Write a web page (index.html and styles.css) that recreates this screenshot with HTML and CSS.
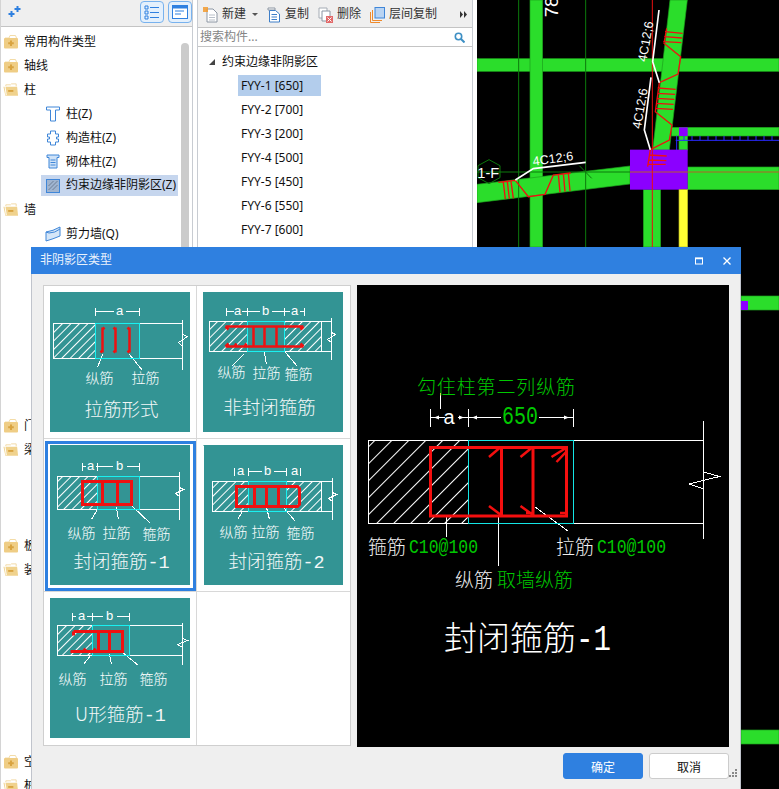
FILE: index.html
```html
<!DOCTYPE html>
<html lang="zh-CN">
<head>
<meta charset="utf-8">
<title>非阴影区类型</title>
<link rel="stylesheet" href="styles.css">
</head>
<body>
<svg class="defs" aria-hidden="true">
  <defs>
    <pattern id="h6" width="6" height="6" patternUnits="userSpaceOnUse" patternTransform="rotate(45)"><path class="ha" d="M0 0V6"/></pattern>
    <pattern id="h12" width="12" height="12" patternUnits="userSpaceOnUse" patternTransform="rotate(45)"><path class="ha" d="M0 0V12"/></pattern>
    <symbol id="fold-plus" viewBox="0 0 16 14">
      <path d="M2 3H6L7 0.5H12.5L13.5 3" fill="none" stroke="#f3dca8"/>
      <rect x="1" y="3" width="14" height="10.5" rx="1" fill="#efcd85"/>
      <path d="M8 5.5V11M5.2 8.2H10.8" stroke="#d9a441" stroke-width="2"/>
    </symbol>
    <symbol id="fold-minus" viewBox="0 0 17 14">
      <path d="M3 3V1.5H8L9 .5H14V3" fill="none" stroke="#f1d9a3"/>
      <path d="M0.5 3.5H15L16 13H2.5Z" fill="#f0d28d"/>
      <path d="M2 2.6 3.5 12.5" stroke="#fff" stroke-width="1"/>
      <path d="M5.5 8H11" stroke="#d9a441" stroke-width="2"/>
    </symbol>
  </defs>
</svg>

<div class="app">
  <aside class="side">
    <div class="bar side-bar">
      <svg class="ico-add" viewBox="0 0 14 12"><path d="M9.5 0V6M6.5 3H12.5" stroke="#2f80e0" stroke-width="2"/><path d="M3.5 5V11M.5 8H6.5" stroke="#2f80e0" stroke-width="2"/></svg>
      <div class="side-tools">
        <button class="tool"><svg viewBox="0 0 16 16"><path d="M1 2h3v3H1zM1 7h3v3H1zM1 12h3v3H1z" fill="none" stroke="#2f80e0"/><path d="M6 3.5h9M6 8.5h9M6 13.5h9" stroke="#2f80e0"/></svg></button>
        <button class="tool"><svg viewBox="0 0 16 16"><rect x=".5" y="1.5" width="15" height="13" fill="#fff" stroke="#2f80e0"/><rect x=".5" y="1.5" width="15" height="3" fill="#2f80e0"/><path d="M3 7h9M3 10h6" stroke="#2f80e0"/></svg></button>
      </div>
    </div>
    <div class="tree">
      <div class="row"><svg class="fold"><use href="#fold-plus"/></svg>常用构件类型</div>
      <div class="row"><svg class="fold"><use href="#fold-plus"/></svg>轴线</div>
      <div class="row"><svg class="fold"><use href="#fold-minus"/></svg>柱</div>
      <div class="row kid"><svg class="ti" viewBox="0 0 15 16"><path d="M1 1H14V4H10V15H5V4H1Z" fill="#fff" stroke="#3f86d8"/></svg>柱(Z)</div>
      <div class="row kid"><svg class="ti" viewBox="0 0 15 16"><path d="M5 1H10V4H13V7H11V9H13V12H10V15H5V12H2V9H4V7H2V4H5Z" fill="#fff" stroke="#3f86d8"/></svg>构造柱(Z)</div>
      <div class="row kid"><svg class="ti" viewBox="0 0 15 16"><path d="M1.500 1H13.500V3.500H11.500V14H3.500V3.500H1.500Z" fill="#cfe2f7" stroke="#3f86d8"/><path d="M5 6H10M5 8.500H10M5 11H10" stroke="#3f86d8"/></svg>砌体柱(Z)</div>
      <div class="row kid sel"><svg class="ti" viewBox="0 0 15 16"><rect x="1" y="1.500" width="13" height="13" fill="#9fb4d0" stroke="#3f86d8"/><path d="M3 12 12 3M3 8 8 3M7 12 12 7" stroke="#6f7f96"/></svg>约束边缘非阴影区(Z)</div>
      <div class="row"><svg class="fold"><use href="#fold-minus"/></svg>墙</div>
      <div class="row kid"><svg class="ti" viewBox="0 0 16 16"><path d="M1 6Q8 5 15 1V10Q8 13 1 15Z" fill="#d5e6f8" stroke="#3f86d8"/><path d="M1 6 4 7Q10 7 15 3" fill="none" stroke="#3f86d8"/></svg>剪力墙(Q)</div>
      <div class="spacer-7"></div>
      <div class="row"><svg class="fold"><use href="#fold-plus"/></svg>门窗洞</div>
      <div class="row"><svg class="fold"><use href="#fold-minus"/></svg>梁</div>
      <div class="spacer-3"></div>
      <div class="row"><svg class="fold"><use href="#fold-plus"/></svg>板</div>
      <div class="row"><svg class="fold"><use href="#fold-minus"/></svg>装修</div>
      <div class="spacer-7b"></div>
      <div class="row"><svg class="fold"><use href="#fold-plus"/></svg>空间</div>
      <div class="row"><svg class="fold"><use href="#fold-minus"/></svg>桩</div>
    </div>
    <div class="scroll"></div>
  </aside>

  <section class="mid">
    <div class="bar mid-bar">
      <span class="act"><svg class="ai" viewBox="0 0 15 16"><path d="M4 2H10L14 6V15H4Z" fill="#fff" stroke="#8c96a3"/><path d="M6 8H12M6 10.500H12M6 13H12" stroke="#b9c0c9"/><path d="M0 0H5V5H0Z" fill="#f29a2e" opacity=".85"/></svg>新建<i class="caret"></i></span>
      <span class="act a2"><svg class="ai" viewBox="0 0 15 16"><path d="M2 1H9V3H2Z" fill="#fff" stroke="#8c96a3"/><path d="M3.500 3.500H9.500L13.500 7V15H3.500Z" fill="#fff" stroke="#3f7fc8"/><path d="M5.500 7.500H11M5.500 10H11M5.500 12.500H11" stroke="#3f7fc8"/></svg>复制</span>
      <span class="act a3"><svg class="ai" viewBox="0 0 15 16"><path d="M1 1H9V11H1Z" fill="#fff" stroke="#a4abb4"/><path d="M4 4H12V14H4Z" fill="#fff" stroke="#8c96a3"/><rect x="8" y="9" width="7" height="7" fill="#e26a6a"/><path d="M9.500 10.500 13.500 14.500M13.500 10.500 9.500 14.500" stroke="#fff"/></svg>删除</span>
      <span class="act a4"><svg class="ai" viewBox="0 0 15 16"><path d="M.5 5V15.500H10" fill="none" stroke="#ee8a2c"/><path d="M2.500 3V13.500H12" fill="none" stroke="#ee8a2c"/><rect x="5" y=".5" width="9.500" height="10.500" fill="#b9d4f3" stroke="#3f86d8"/></svg>层间复制</span>
      <svg class="more" viewBox="0 0 7 7"><path d="M0 0 3 3.500 0 7ZM4 0 7 3.500 4 7Z" fill="#333"/></svg>
    </div>
    <div class="search"><span>搜索构件...</span><svg class="mag" viewBox="0 0 11 11"><circle cx="4.500" cy="4.500" r="3.200" fill="none" stroke="#3d8fc4" stroke-width="1.600"/><path d="M7 7 10.500 10.500" stroke="#3d8fc4" stroke-width="2"/></svg></div>
    <div class="list">
      <div class="group"><i class="tri"></i>约束边缘非阴影区</div>
      <div class="item"><span class="on">FYY-1 [650]</span></div>
      <div class="item"><span>FYY-2 [700]</span></div>
      <div class="item"><span>FYY-3 [200]</span></div>
      <div class="item"><span>FYY-4 [500]</span></div>
      <div class="item"><span>FYY-5 [450]</span></div>
      <div class="item"><span>FYY-6 [550]</span></div>
      <div class="item"><span>FYY-7 [600]</span></div>
    </div>
  </section>

  <main class="canvas">
    <svg class="cad" viewBox="21 0 906 2367">
      <g class="green">
        <rect x="21" y="176" width="906" height="38"/>
        <rect x="180" y="0" width="38" height="741"/>
        <path d="M600 0H652L598 450H548Z"/>
        <rect x="605" y="382" width="322" height="26"/>
        <rect x="627" y="408" width="26" height="42"/>
        <rect x="653" y="501" width="274" height="68"/>
        <path d="M21 553 480 498V552L21 608Z"/>
        <rect x="520" y="569" width="52" height="172"/>
        <rect x="813" y="888" width="114" height="42"/>
        <rect x="813" y="2190" width="114" height="42"/>
      </g>
      <rect class="violet" x="480" y="449" width="173" height="120"/>
      <rect class="violet" x="627" y="382" width="26" height="26"/>
      <rect class="violet" x="813" y="903" width="21" height="27"/>
      <rect class="yellow" x="627" y="569" width="26" height="172"/>
      <path class="blue" d="M617 421H927M642 408V421M666 408V421M690 408V421M714 408V421M738 408V421M762 408V421M786 408V421M810 408V421M834 408V421M858 408V421M882 408V421M906 408V421M620 408V450"/>
      <path class="dk" d="M146 0V741M347 0V741M21 516H480M328 497 365 535"/>
      <path class="brown" d="M480 516H927"/>
      <path class="rd" d="M547 0V741"/>
      <path class="rb" d="M85 547 136 541 175 590 225 583 250 525 302 519M100 547 106 597M112 545 118 596M123 544 130 595M265 522 270 577M280 520 285 575M295 519 300 573"/>
      <path class="rb" d="M585 95 638 100M583 110 636 114M580 125 634 128M590 85 582 130 632 170 624 222 568 248 556 335 606 375 598 420 541 449 533 500M563 264 617 268M562 280 615 283M561 295 613 298M559 310 611 313M557 325 609 328M538 465 590 468M536 480 589 482M534 493 587 493"/>
      <path class="wl" d="M567 30 548 185 568 248M543 232 523 390 541 449M347 487 190 506 136 540"/>
      <path class="hex" d="M57 479 90 497V533L57 551 24 533V497Z"/>
      <text class="cadt" transform="translate(529,187) rotate(-80)">4C12;6</text>
      <text class="cadt" transform="translate(512,388) rotate(-80)">4C12;6</text>
      <text class="cadt" transform="translate(190,497) rotate(-8)">4C12;6</text>
      <text class="cadt big" transform="translate(265,52) rotate(-90)">78</text>
      <text class="cadt mid-t" x="55" y="535" text-anchor="middle">1-F</text>
    </svg>
  </main>
</div>

<div class="dialog">
  <header class="dlg-head">
    <span class="dlg-title">非阴影区类型</span>
    <svg class="win max" viewBox="0 0 8 8"><rect x=".5" y="1" width="7" height="6" fill="none" stroke="#fff"/><path d="M0 1.500H8" stroke="#fff" stroke-width="1.500"/></svg>
    <svg class="win" viewBox="0 0 8 8"><path d="M.5 .5 7.500 7.500M7.500 .5 .5 7.500" stroke="#fff" stroke-width="1.300"/></svg>
  </header>
  <div class="dlg-body">
    <div class="grid">
      <div class="cell">
        <svg class="thumb" viewBox="0 0 140 140"><g class="px">
          <rect x="3" y="31" width="42" height="35" fill="url(#h6)"/>
          <path class="w" d="M45 31H3V66H45M89 31H132M89 66H132M132 27V77M132 42 137 44 128 50 132 54M45 15V23M89 15V23M45 19H63M75 19H89M52 62 47 75M79 62 92 78"/>
          <rect class="c" x="45" y="31" width="44" height="35"/>
          <path class="r2" d="M52 35V60M65 35V60M79 35V60M52 37 54 35M65 37 63 35M79 37 77 35M52 58 50 60M65 58 63 60M79 58 77 60"/>
          <text class="dim" x="69" y="22">a</text>
          <text class="lab" x="49" y="90">纵筋</text><text class="lab" x="95" y="90">拉筋</text>
          <text class="ttl" x="71" y="123">拉筋形式</text>
        </g></svg>
      </div>
      <div class="cell">
        <svg class="thumb" viewBox="0 0 140 140"><g class="px">
          <rect x="6" y="29" width="38" height="30" fill="url(#h6)"/><rect x="81" y="29" width="37" height="30" fill="url(#h6)"/>
          <path class="w" d="M44 29H6V59H44M81 29H128M81 59H128M118 29V59M128 25V67M128 40 132 42 124 47 128 50M23 15V23M44 15V23M81 15V23M101 15V23M23 19H30M38 19H56M68 19H86M96 19H101M40 62 28 74M61 60 63 72M82 60 94 74"/>
          <rect class="c" x="44" y="29" width="37" height="30"/>
          <path class="r2" d="M22 34H100M22 54H100M50 34V54M61 34V54M73 34V54M22 34 25 37M100 34 97 37M22 54 25 51M100 54 97 51M31 54 33 51M41 54 43 51"/>
          <text class="dim" x="34" y="22">a</text><text class="dim" x="62" y="22">b</text><text class="dim" x="91" y="22">a</text>
          <text class="lab" x="28" y="84">纵筋</text><text class="lab" x="63" y="85">拉筋</text><text class="lab" x="95" y="86">箍筋</text>
          <text class="ttl" x="66" y="121">非封闭箍筋</text>
        </g></svg>
      </div>
      <div class="cell selected">
        <svg class="thumb" viewBox="0 0 140 140"><g class="px">
          <rect x="7" y="31" width="40" height="33" fill="url(#h6)"/>
          <path class="w" d="M47 31H7V64H47M89 31H129M89 64H129M129 26V74M129 42 133 44 125 48 129 51M32 17V25M47 17V25M89 17V25M32 21H35M45 21H62M76 21H89M47 64 41 74M66 62 68 74M81 60 100 78"/>
          <rect class="c" x="47" y="31" width="42" height="33"/>
          <path class="r3" d="M32 36H81V59H32ZM52 36V59M67 36V59"/>
          <text class="dim" x="40" y="24">a</text><text class="dim" x="69" y="24">b</text>
          <text class="lab" x="31" y="92">纵筋</text><text class="lab" x="66" y="92">拉筋</text><text class="lab" x="106" y="93">箍筋</text>
          <text class="ttl" x="71" y="122">封闭箍筋<tspan class="mono">-1</tspan></text>
        </g></svg>
      </div>
      <div class="cell">
        <svg class="thumb" viewBox="0 0 140 140"><g class="px">
          <path d="M0 0V140" stroke="#fff"/>
          <rect x="9" y="36" width="36" height="30" fill="url(#h6)"/><rect x="83" y="36" width="35" height="30" fill="url(#h6)"/>
          <path class="w" d="M45 36H9V66H45M83 36H129M83 66H129M118 36V66M129 32V74M129 47 133 49 125 53 129 56M31 22V30M45 22V30M83 22V30M97 22V30M45 26H58M70 26H83M39 66 34 74M63 62 66 74M80 62 92 76"/>
          <rect class="c" x="45" y="36" width="38" height="30"/>
          <path class="r3" d="M33 41H94L96 43V59L94 61H33ZM51 41V61M63 41V61M75 41V61"/>
          <text class="dim" x="37" y="29">a</text><text class="dim" x="64" y="29">b</text><text class="dim" x="91" y="29">a</text>
          <text class="lab" x="30" y="91">纵筋</text><text class="lab" x="62" y="91">拉筋</text><text class="lab" x="97" y="92">箍筋</text>
          <text class="ttl" x="73" y="122">封闭箍筋<tspan class="mono">-2</tspan></text>
        </g></svg>
      </div>
      <div class="cell">
        <svg class="thumb" viewBox="0 0 140 140"><g class="px">
          <rect x="7" y="27" width="35" height="30" fill="url(#h6)"/>
          <path class="w" d="M42 27H7V57H42M79 27H132M79 57H132M132 24V66M132 40 137 42 127 46 132 49M22 14V22M42 14V22M79 14V22M22 18H25M36 18H52M66 18H79M40 57 33 66M59 56 61 66M72 54 88 67"/>
          <rect class="c" x="42" y="27" width="37" height="30"/>
          <path class="r3" d="M23 33H72V53H20M48 33V53M59 33V53M23 33V37M33 53 35 50M43 53 45 50"/>
          <text class="dim" x="31" y="21">a</text><text class="dim" x="59" y="21">b</text>
          <text class="lab" x="22" y="85">纵筋</text><text class="lab" x="63" y="85">拉筋</text><text class="lab" x="103" y="85">箍筋</text>
          <text class="ttl" x="70" y="122">U形箍筋<tspan class="mono">-1</tspan></text>
        </g></svg>
      </div>
      <div class="cell empty"></div>
    </div>

    <svg class="preview" viewBox="357 285 372 462">
      <rect x="368.500" y="440.500" width="100" height="83" fill="url(#h12)"/>
      <path class="pw" d="M468 440.500H368.500V523.500H468M573 440.500H703.500M573 523.500H703.500M703.500 421V539M703.500 472 719.500 476.500 689 484 703.500 489M430.500 409V427M468.500 409V427M573.500 409V427M430.500 417.500H445M458 417.500H468M468.500 417.500H501M539 417.500H573M440.500 393V409M446.500 516V537M498.500 515V566M535 507 568 531"/>
      <path class="tips" d="M434 417.500 439 415.500V419.500ZM464 417.500 459 415.500V419.500ZM472 417.500 477 415.500V419.500ZM569 417.500 564 415.500V419.500Z"/>
      <rect class="pc" x="468.500" y="440.500" width="105" height="83"/>
      <path class="pr" d="M430.500 447.500H566.500V516H430.500ZM501.500 447.500V516M533 447.500V516"/>
      <path class="ph" d="M499.500 448 489 457M531.500 448 520.500 457M566 448 551.500 457M566 452 556.500 462M501 515 489 506M533 515 520.500 506M533 513H526M566 513H560"/>
      <text class="cn g" x="417" y="394" textLength="158">勾住柱第二列纵筋</text>
      <text class="pa" x="449" y="424">a</text>
      <text class="pm g" x="502" y="424" textLength="36" lengthAdjust="spacingAndGlyphs">650</text>
      <text class="cn p" x="368" y="554">箍筋</text><text class="ps g" x="409" y="553" textLength="69" lengthAdjust="spacingAndGlyphs">C10@100</text>
      <text class="cn p" x="556" y="554">拉筋</text><text class="ps g" x="597" y="553" textLength="69" lengthAdjust="spacingAndGlyphs">C10@100</text>
      <text class="cn p" x="455" y="587">纵筋</text><text class="cn g" x="497" y="587">取墙纵筋</text>
      <text class="pt" x="444" y="650">封闭箍筋</text><text class="ptm" x="576" y="650" textLength="35" lengthAdjust="spacingAndGlyphs">-1</text>
    </svg>
  </div>
  <footer class="dlg-foot">
    <button class="btn primary">确定</button>
    <button class="btn">取消</button>
    <svg class="grip" viewBox="0 0 8 8"><path d="M6 0h2v2H6zM3 3h2v2H3zM6 3h2v2H6zM0 6h2v2H0zM3 6h2v2H3zM6 6h2v2H6z" fill="#888"/></svg>
  </footer>
</div>
</body>
</html>
```
FILE: styles.css
```css
* { box-sizing: border-box; }
html, body { margin: 0; height: 100%; }
body {
  width: 779px;
  height: 789px;
  overflow: hidden;
  background: #fff;
  color: #111;
  font: 12px/1.2 "Noto Sans", "Noto Sans CJK SC", sans-serif;
  position: relative;
}
.defs { position: absolute; width: 0; height: 0; }
.ha { stroke: #fff; stroke-width: 1; shape-rendering: crispEdges; }
.px { transform: translate(.5px, .5px); }

.app { display: flex; height: 789px; }

/* left tree */
.side {
  position: relative;
  width: 193px;
  flex: none;
  border-left: 1px solid #d4d4d4;
  border-right: 1px solid #c8ccd2;
  overflow: hidden;
}
.bar {
  display: flex;
  align-items: center;
  background: #efefef;
  border-bottom: 1px solid #c4c4c4;
}
.side-bar { height: 27px; padding: 0 0 2px 7px; justify-content: space-between; }
.ico-add { width: 14px; height: 12px; }
.side-tools { display: flex; gap: 4px; }
.tool {
  width: 24px;
  height: 22px;
  padding: 3px;
  display: flex;
  align-items: center;
  justify-content: center;
  background: #e4f0fc;
  border: 1px solid #78b2ee;
  border-radius: 4px;
}
.tool svg { width: 16px; height: 16px; }
.tree { padding-top: 3px; }
.row { display: flex; align-items: center; height: 24px; padding-left: 2px; white-space: nowrap; }
.fold { width: 16px; height: 14px; margin-right: 5px; flex: none; }
.kid { margin-left: 40px; padding-left: 4px; width: 137px; }
.ti { width: 16px; height: 16px; margin-right: 5px; flex: none; }
.kid.sel { height: 21px; margin-top: 1px; margin-bottom: 2px; background: #c6d6ee; }
.spacer-7 { height: 168px; }
.spacer-3 { height: 72px; }
.spacer-7b { height: 168px; }
.scroll {
  position: absolute;
  left: 180px;
  top: 43px;
  width: 8px;
  height: 330px;
  background: #cbcbcb;
  border-radius: 4px;
}

/* middle list */
.mid {
  width: 276px;
  flex: none;
  margin-left: 4px;
  border-left: 1px solid #c8ccd2;
  border-right: 1px solid #c8ccd2;
}
.mid-bar { height: 28px; padding: 2px 0 0 5px; color: #333; }
.act { display: flex; align-items: center; white-space: nowrap; }
.ai { width: 15px; height: 16px; margin-right: 4px; flex: none; }
.caret {
  margin-left: 6px;
  border: 3px solid transparent;
  border-top: 3px solid #555;
  border-bottom: 0;
}
.a2 { margin-left: 8px; }
.a3 { margin-left: 9px; }
.a4 { margin-left: 9px; }
.more { width: 7px; height: 7px; margin-left: auto; margin-right: 5px; }
.search {
  display: flex;
  align-items: center;
  justify-content: space-between;
  height: 19px;
  padding: 1px 7px 0 2px;
  color: #858585;
  border-bottom: 1px solid #c4c4c4;
}
.mag { width: 11px; height: 11px; }
.list { padding-top: 2px; }
.group { display: flex; align-items: center; height: 24px; padding: 2px 0 0 11px; }
.tri {
  width: 0;
  height: 0;
  margin-right: 7px;
  border-left: 6px solid transparent;
  border-bottom: 6px solid #444;
}
.item { display: flex; align-items: center; height: 24px; padding-left: 40px; }
.item span { min-width: 83px; height: 21px; line-height: 21px; padding: 0 3px; white-space: pre; }
.item .on { background: #b3cdec; }

/* cad canvas */
.canvas { flex: 1; margin-left: 4px; background: #000; overflow: hidden; }
.cad { display: block; width: 302px; height: 789px; }
.green { fill: #2bdd2b; stroke: #1c9e1c; stroke-width: 2; }
.violet { fill: #8b00ff; }
.yellow { fill: #ffff33; stroke: #b5b51e; stroke-width: 2; }
.blue { fill: none; stroke: #2a2aff; stroke-width: 3; }
.dk { fill: none; stroke: #0c7a0c; stroke-width: 3; }
.brown { fill: none; stroke: #b5602a; stroke-width: 3; }
.rd { fill: none; stroke: #e81010; stroke-width: 3; }
.rb { fill: none; stroke: #f01010; stroke-width: 4; }
.wl { fill: none; stroke: #fff; stroke-width: 5; }
.hex { fill: none; stroke: #0c7a0c; stroke-width: 3; }
.cadt { fill: #fff; font: 38px "Liberation Sans", sans-serif; }
.cadt.big { font-size: 56px; }
.cadt.mid-t { font-size: 44px; }

/* dialog */
.dialog {
  position: absolute;
  left: 31px;
  top: 247px;
  width: 710px;
  height: 542px;
  display: flex;
  flex-direction: column;
  background: #efefef;
  border-left: 1px solid #c0c4cc;
  border-right: 1px solid #c0c4cc;
}
.dlg-head {
  display: flex;
  align-items: center;
  height: 27px;
  margin: 0 -1px;
  padding: 0 10px 0 9px;
  background: #2f80e0;
  color: #e9f1fc;
  flex: none;
}
.dlg-title { margin-right: auto; }
.win { width: 8px; height: 8px; margin-left: 20px; }
.max { width: 8px; }
.dlg-body { display: flex; gap: 6px; padding: 11px 11px 0 11px; height: 473px; flex: none; }
.grid {
  display: grid;
  grid-template-columns: 153px 153px;
  grid-template-rows: repeat(3, 153px);
  width: 308px;
  height: 461px;
  background: #fff;
  border: 1px solid #cfcfcf;
}
.cell {
  position: relative;
  padding: 6px;
  border-right: 1px solid #d8d8d8;
  border-bottom: 1px solid #d8d8d8;
}
.cell:nth-child(even) { border-right: 0; }
.cell:nth-child(n+5) { border-bottom: 0; }
.selected::after {
  content: "";
  position: absolute;
  left: 1px;
  top: 2px;
  right: 0;
  bottom: 0;
  border: 3px solid #2f80e0;
}
.thumb { display: block; width: 140px; height: 140px; background: #339494; }
.w { fill: none; stroke: #fff; stroke-width: 1; shape-rendering: crispEdges; }
.c { fill: none; stroke: #19f0f0; stroke-width: 1; shape-rendering: crispEdges; }
.r2 { fill: none; stroke: #f01010; stroke-width: 2.500; }
.r3 { fill: none; stroke: #f01010; stroke-width: 3; }
.dim { fill: #fff; font: 13px "Liberation Sans", sans-serif; text-anchor: middle; }
.lab { fill: #fff; font: 300 14px "Noto Sans CJK SC", sans-serif; text-anchor: middle; }
.ttl { fill: #f2f7f7; font: 300 18.500px "Noto Sans CJK SC", sans-serif; text-anchor: middle; }
.mono { font-family: "Liberation Mono", monospace; }

.preview { display: block; width: 372px; height: 462px; background: #000; flex: none; }
.pw { fill: none; stroke: #fff; stroke-width: 1; shape-rendering: crispEdges; }
.tips { fill: #fff; }
.pc { fill: none; stroke: #14e6e6; stroke-width: 1; shape-rendering: crispEdges; }
.pr { fill: none; stroke: #f40f0f; stroke-width: 3; }
.ph { fill: none; stroke: #f40f0f; stroke-width: 2.500; }
.cn { font: 300 19px "Noto Sans CJK SC", sans-serif; }
.g { fill: #00c800; }
.p { fill: #f0f0f0; }
.pa { fill: #fff; font: 20px "Liberation Sans", sans-serif; text-anchor: middle; }
.pm { font: 26px "Liberation Mono", monospace; }
.ps { font: 21px "Liberation Mono", monospace; }
.pt { fill: #fff; font: 300 33px "Noto Sans CJK SC", sans-serif; }
.ptm { fill: #fff; font: 36px "Liberation Mono", monospace; }

.dlg-foot {
  position: relative;
  display: flex;
  justify-content: flex-end;
  gap: 6px;
  padding: 6px 11px 0 0;
}
.btn {
  width: 80px;
  height: 26px;
  padding: 0;
  font: 12px "Noto Sans CJK SC", sans-serif;
  color: #111;
  background: #fff;
  border: 1px solid #ccc;
  border-radius: 3px;
}
.primary { background: #2f80e0; border-color: #2f80e0; color: #fff; }
.grip { position: absolute; right: 3px; bottom: 2px; width: 8px; height: 8px; }
```
